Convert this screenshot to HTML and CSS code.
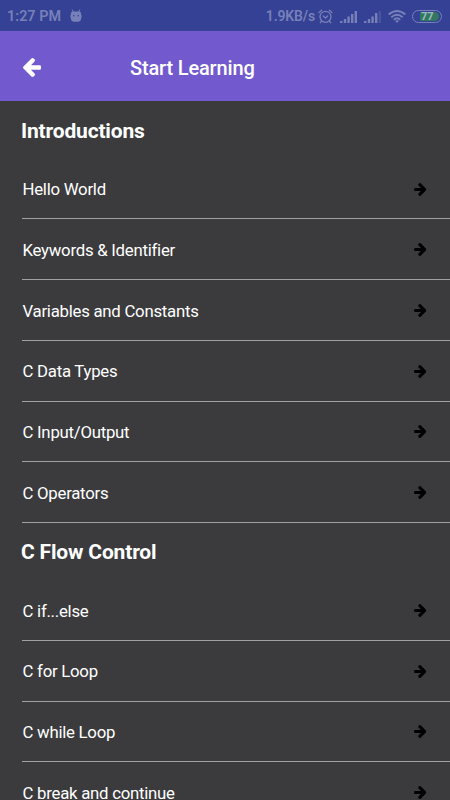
FILE: index.html
```html
<!DOCTYPE html>
<html lang="en">
<head>
<meta charset="utf-8">
<title>Start Learning</title>
<link rel="stylesheet" href="styles.css">
</head>
<body>
<svg class="defs" aria-hidden="true">
  <symbol id="arrow" viewBox="64 181 1472 1558"><path d="M1536 896v128q0 53-32.5 90.5t-84.5 37.5h-704l293 294q38 36 38 90t-38 90l-75 76q-37 37-90 37-52 0-91-37l-651-652q-37-37-37-90 0-52 37-91l651-650q38-38 91-38 52 0 90 38l75 74q38 38 38 91t-38 91l-293 293h704q52 0 84.5 37.5t32.5 90.5z"/></symbol>
</svg>
<div class="status">
  <span class="time">1:27 PM</span>
  <svg class="bug" viewBox="0 0 12 14"><path d="M2.2 0.5L3.3 3M9.8 0.5L8.7 3" stroke="currentColor" stroke-width="1"/><path d="M2.5 2.5h7q1.6 0 1.6 2.5v4.2q0 3.6-3.4 3.6H4.3Q.9 12.8 .9 9.2V5q0-2.5 1.6-2.5z" fill="currentColor"/><path d="M0 6v3M12 6v3" stroke="currentColor"/><circle cx="3.8" cy="6.7" r=".8" fill="#344194"/><circle cx="8.2" cy="6.7" r=".8" fill="#344194"/></svg>
  <span class="speed">1.9KB/s</span>
  <svg class="alarm" viewBox="0 0 15 15" fill="none" stroke="currentColor" stroke-width="1.3" stroke-linecap="round"><circle cx="7.5" cy="7.8" r="5.5"/><path d="M1 3.5L3.7 1.2M14 3.5L11.3 1.2M3.5 12.2L2.3 13.7M11.5 12.2L12.7 13.7M5.3 7L7.5 9L9.7 7"/></svg>
  <svg class="signal" viewBox="0 0 18 13" fill="currentColor"><path d="M0 11h2.4v2H0zM3.8 9h2.4v4H3.8zM7.4 6.5h2.4V13H7.4zM11 4h2.4v9H11zM14.6 1H17v12h-2.400z"/></svg>
  <svg class="signal second" viewBox="0 0 18 13" fill="currentColor"><path d="M0 11h2.4v2H0zM3.8 9h2.4v4H3.8zM7.4 6.5h2.4V13H7.4zM11 3h2.4v10H11z"/><path opacity=".3" d="M14.6 1H17v12h-2.400z"/></svg>
  <svg class="wifi" viewBox="0 0 18 13" fill="none" stroke="currentColor" stroke-width="1.9"><path d="M.7 4.500Q9-2.500 17.300 4.500M3.300 7.200Q9 2.500 14.700 7.200M5.800 9.700Q9 7 12.200 9.700"/><path d="M9 13L7 10.800Q9 9.500 11 10.800z" fill="currentColor" stroke="none"/></svg>
  <span class="battery"><span class="level">77</span></span>
</div>
<header class="bar">
  <svg class="back"><use href="#arrow"/></svg>
  <h1>Start Learning</h1>
</header>
<main>
  <section>
    <h2>Introductions</h2>
    <ul>
      <li>Hello World<svg class="go"><use href="#arrow"/></svg></li>
      <li>Keywords &amp; Identifier<svg class="go"><use href="#arrow"/></svg></li>
      <li>Variables and Constants<svg class="go"><use href="#arrow"/></svg></li>
      <li>C Data Types<svg class="go"><use href="#arrow"/></svg></li>
      <li>C Input/Output<svg class="go"><use href="#arrow"/></svg></li>
      <li>C Operators<svg class="go"><use href="#arrow"/></svg></li>
    </ul>
  </section>
  <section>
    <h2 class="flow">C Flow Control</h2>
    <ul>
      <li>C if...else<svg class="go"><use href="#arrow"/></svg></li>
      <li>C for Loop<svg class="go"><use href="#arrow"/></svg></li>
      <li>C while Loop<svg class="go"><use href="#arrow"/></svg></li>
      <li>C break and continue<svg class="go"><use href="#arrow"/></svg></li>
    </ul>
  </section>
</main>
</body>
</html>
```
FILE: styles.css
```css
* { box-sizing: border-box; }
body {
  margin: 0;
  height: 800px;
  overflow: hidden;
  background: #3b3b3d;
  color: #fff;
  font-family: Roboto, sans-serif;
}
svg { display: block; flex: none; }
.defs { display: none; }
.status {
  display: flex;
  align-items: center;
  height: 31px;
  padding: 1px 8px 0 7px;
  background: #344194;
  color: #7880b9;
  font-size: 14.4px;
  font-weight: 600;
  white-space: nowrap;
}
.time { width: 63px; }
.bug { width: 12px; height: 14px; }
.speed { margin-left: auto; font-size: 14px; letter-spacing: -0.15px; }
.alarm { width: 15px; height: 15px; margin-left: 3px; }
.signal { width: 18px; height: 13px; margin-left: 7px; }
.signal.second { margin-left: 6px; }
.wifi { width: 18px; height: 13px; margin-left: 6px; }
.battery {
  width: 30px;
  height: 13px;
  margin-left: 6px;
  padding: 1px 2px 1px 7px;
  border: 1px solid #7880b9;
  border-radius: 7px;
}
.level {
  display: block;
  height: 9px;
  padding-left: 1px;
  border-radius: 0 5px 5px 0;
  background: #32775f;
  color: #9ebbc0;
  font-size: 11px;
  font-weight: 700;
  line-height: 9px;
}
.bar {
  display: flex;
  align-items: center;
  height: 70px;
  padding: 3px 0 0 23px;
  background: #7259ce;
}
.back { width: 18px; height: 19px; fill: #fff; }
h1 { margin: 0 0 0 89px; font-size: 20px; font-weight: 500; letter-spacing: -0.16px; }
h2 {
  height: 57.8px;
  margin: 0;
  padding: 17px 0 0 21px;
  font-size: 21px;
  line-height: 26px;
  font-weight: 700;
  letter-spacing: -0.17px;
}
h2.flow { height: 57.3px; padding-top: 16px; }
ul { margin: 0 0 0 22px; padding: 0; list-style: none; }
li {
  display: flex;
  align-items: center;
  justify-content: space-between;
  height: 60.7px;
  padding: 1px 23.5px 0 0.5px;
  border-bottom: 1px solid #a0a0a1;
  font-size: 16.8px;
  letter-spacing: -0.26px;
}
.go { width: 12.5px; height: 13px; transform: scaleX(-1); }
```
